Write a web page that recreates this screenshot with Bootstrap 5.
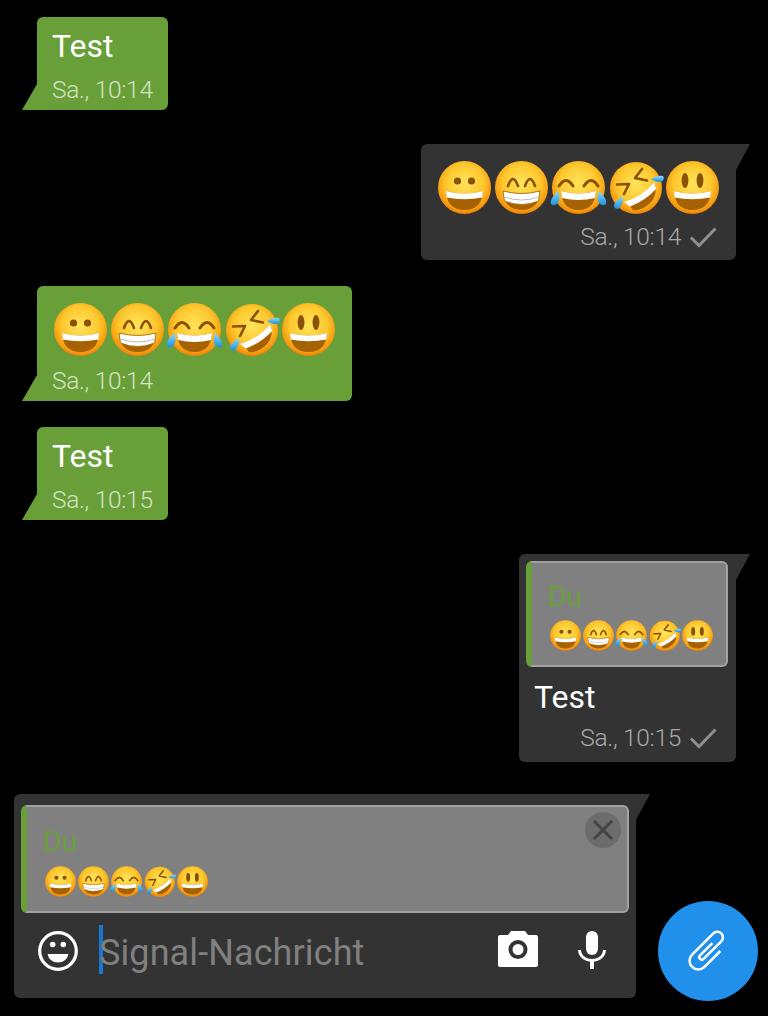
<!DOCTYPE html>
<html lang="de">
<head>
    <meta charset="UTF-8">
    <meta name="viewport" content="width=device-width, initial-scale=1.0">
    <title>Signal</title>
    <link href="https://cdn.jsdelivr.net/npm/bootstrap@5.3.0/dist/css/bootstrap.min.css" rel="stylesheet">
    <style>
        body {
            background: #000;
            font-family: Roboto, "Liberation Sans", sans-serif;
        }
        .chat { padding: 17px 32px 0 37px; height: 794px; }
        .msg {
            position: relative;
            border-radius: 6px;
            padding: 10px 15px 5px;
            color: #fff;
        }
        .msg-in { background: #689f38; align-self: flex-start; border-bottom-left-radius: 0; }
        .msg-out { background: #333; align-self: flex-end; border-top-right-radius: 0; padding-bottom: 8px; }
        .msg-in::before, .msg-out::after, .composer::after {
            content: "";
            position: absolute;
        }
        .msg-in::before {
            left: -15px; bottom: 0; width: 15px; height: 26px;
            background: #689f38;
            clip-path: polygon(100% 0, 100% 100%, 0 100%);
        }
        .msg-out::after, .composer::after {
            right: -14px; top: 0; width: 14px; height: 26px;
            background: #333;
            clip-path: polygon(0 0, 100% 0, 0 100%);
        }
        .msg-text { font-size: 32px; line-height: 38px; margin-bottom: 10px; }
        .msg-time {
            font-size: 24.5px; line-height: 30px; font-weight: 300;
            letter-spacing: -.3px;
            white-space: nowrap;
        }
        .msg-in .msg-time { color: #d3e3c5; }
        .msg-out .msg-time { color: #a8a8a8; }
        .emoji-row { height: 64px; margin: 1px 0 5px; }
        .msg-out .emoji-row { margin-bottom: 3px; }
        .emoji-big { width: 57px; height: 57px; }
        .emoji-small { width: 33px; height: 33px; }
        .emoji-line { margin-left: 1px; }
        .check { width: 28px; height: 22px; margin: 0 4px 0 8px; }
        .gap-a { margin-bottom: 34px; }
        .gap-b { margin-bottom: 26px; }
        .quote {
            background: #808080;
            border: 2px solid #a2a2a2;
            border-left: 6px solid #689f38;
            border-radius: 6px;
            position: relative;
        }
        .quote-name { color: #689f38; font-size: 28px; line-height: 30px; }
        .msg-quoted { width: 217px; padding: 7px 8px 9px 7px; }
        .msg-quoted .quote { height: 106px; padding: 19px 0 0 16px; }
        .msg-quoted .msg-text { margin: 11px 0 7px 8px; }
        .msg-quoted .check { margin-right: 11px; }
        .msg-quoted .quote-name { margin-bottom: 7px; }
        .composer-wrap { padding-left: 14px; }
        .composer {
            position: relative;
            width: 622px; height: 204px;
            background: #333;
            border-radius: 6px;
            border-top-right-radius: 0;
            padding: 11px 7px 0;
        }
        .composer .quote { height: 108px; padding: 20px 0 0 16px; }
        .composer .quote-name { margin-bottom: 8px; }
        .close-btn {
            position: absolute; top: 5px; right: 6px;
            width: 36px; height: 36px;
        }
        .input-row { height: 85px; padding: 0 23px 10px 17px; }
        .face-icon { width: 40px; height: 40px; margin-right: 21px; }
        .caret { width: 4px; height: 49px; background: #1976d2; margin: 0 -4px 2px 0; }
        .hint { color: #808080; font-size: 36px; line-height: 49px; letter-spacing: .1px; margin-top: 6px; }
        .camera-icon { width: 40px; height: 36px; margin: 0 40px 4px 0; }
        .mic-icon { width: 28px; height: 38px; margin-bottom: 2px; }
        .fab {
            width: 100px; height: 100px;
            background: #2090ea;
            border: 0;
            border-radius: 50%;
            margin: 107px 0 0 22px;
        }
        .fab svg { width: 50px; height: 50px; }
    </style>
</head>
<body>
    <svg class="d-block" width="0" height="0" aria-hidden="true">
        <defs>
            <radialGradient id="skin" cx="50%" cy="42%" r="58%">
                <stop offset="0" stop-color="#ffe45c"/>
                <stop offset=".62" stop-color="#fdc72d"/>
                <stop offset=".9" stop-color="#f69a0f"/>
                <stop offset="1" stop-color="#ea7e08"/>
            </radialGradient>
            <linearGradient id="drop" x1="0" y1="0" x2="0" y2="1">
                <stop offset="0" stop-color="#8bdcff"/>
                <stop offset="1" stop-color="#1d8fdc"/>
            </linearGradient>
            <symbol id="e-grin" viewBox="0 0 57 57">
                <circle cx="28.5" cy="28.5" r="26.5" fill="url(#skin)"/>
                <circle cx="21.500" cy="22" r="3.600" fill="#8a5200"/>
                <circle cx="35.500" cy="22" r="3.600" fill="#8a5200"/>
                <path d="M10 32Q28.500 37 47 32Q46 51 28.500 51Q11 51 10 32Z" fill="#a66100"/>
                <path d="M10 32Q28.500 37 47 32L46.300 38.500Q28.500 42 10.700 38.500Z" fill="#fff"/>
            </symbol>
            <symbol id="e-beam" viewBox="0 0 57 57">
                <circle cx="28.5" cy="28.500" r="26.5" fill="url(#skin)"/>
                <path d="M15 27Q20 13 25 27M32 27Q37 13 42 27" fill="none" stroke="#8a5200" stroke-width="2.600" stroke-linecap="round"/>
                <path d="M10 32Q28.500 37 47 32Q46 51 28.500 51Q11 51 10 32Z" fill="#a66100"/>
                <path d="M10 32Q28.500 37 47 32L45.500 42Q28.500 49 11.500 42Z" fill="#fff" stroke="#a66100" stroke-width=".8"/>
                <path d="M11 38Q28.500 44 46 38" fill="none" stroke="#bbb" stroke-width="1"/>
            </symbol>
            <symbol id="e-joy" viewBox="0 0 57 57">
                <circle cx="28.5" cy="28.500" r="26.5" fill="url(#skin)"/>
                <path d="M9 27Q16 16 23 27M34 27Q41 16 48 27" fill="none" stroke="#8a5200" stroke-width="3" stroke-linecap="round"/>
                <path d="M11 32Q28.500 37 46 32Q45 51 28.500 51Q12 51 11 32Z" fill="#a66100"/>
                <path d="M11 32Q28.500 37 46 32L45 39Q28.500 43 12 39Z" fill="#fff"/>
                <path d="M8 32Q11 39 8 44Q4 48 1 45Q-1 41 8 32Z" fill="url(#drop)"/>
                <path d="M49 32Q46 39 49 44Q53 48 56 45Q58 41 49 32Z" fill="url(#drop)"/>
            </symbol>
            <symbol id="e-rofl" viewBox="0 0 57 57">
                <circle cx="29" cy="29" r="26" fill="url(#skin)"/>
                <path d="M20 43Q36 37 47 23Q52 36 42 45Q34 52 26 51Z" fill="#a66100"/>
                <path d="M17 43Q35 38 47 23L49 30Q38 42 23 47.500Z" fill="#fff"/>
                <path d="M10 25.500L22 25L17 35M35 10L28 19L40 21.500" fill="none" stroke="#8a5200" stroke-width="2.600" stroke-linejoin="round" stroke-linecap="round"/>
                <path d="M44 20Q50 16 56 17Q58 20 55 22.500Q49 24 44 20Z" fill="url(#drop)"/>
                <path d="M16 37Q9 41 7 46Q7 50 11 50Q16 47 16 37Z" fill="url(#drop)"/>
            </symbol>
            <symbol id="e-smile" viewBox="0 0 57 57">
                <circle cx="28.5" cy="28.500" r="26.5" fill="url(#skin)"/>
                <ellipse cx="21" cy="21.500" rx="3.400" ry="7.500" fill="#8a5200"/>
                <ellipse cx="36" cy="21.500" rx="3.400" ry="7.500" fill="#8a5200"/>
                <path d="M10 32Q28.500 37 47 32Q46 51 28.500 51Q11 51 10 32Z" fill="#a66100"/>
                <path d="M10 32Q28.500 37 47 32L46.300 38.500Q28.500 42 10.700 38.500Z" fill="#fff"/>
            </symbol>
            <symbol id="i-check" viewBox="0 0 28 22">
                <path d="M2 11.500L10 19.500L26.500 2.500" fill="none" stroke="#8f8f8f" stroke-width="3"/>
            </symbol>
        </defs>
    </svg>

    <main class="chat d-flex flex-column">
        <div class="msg msg-in gap-a">
            <div class="msg-text">Test</div>
            <div class="msg-time">Sa., 10:14</div>
        </div>

        <div class="msg msg-out gap-b">
            <div class="emoji-row d-flex align-items-center">
                <svg class="emoji-big"><use href="#e-grin"/></svg>
                <svg class="emoji-big"><use href="#e-beam"/></svg>
                <svg class="emoji-big"><use href="#e-joy"/></svg>
                <svg class="emoji-big"><use href="#e-rofl"/></svg>
                <svg class="emoji-big"><use href="#e-smile"/></svg>
            </div>
            <div class="d-flex justify-content-end align-items-center">
                <span class="msg-time">Sa., 10:14</span>
                <svg class="check"><use href="#i-check"/></svg>
            </div>
        </div>

        <div class="msg msg-in gap-b">
            <div class="emoji-row d-flex align-items-center">
                <svg class="emoji-big"><use href="#e-grin"/></svg>
                <svg class="emoji-big"><use href="#e-beam"/></svg>
                <svg class="emoji-big"><use href="#e-joy"/></svg>
                <svg class="emoji-big"><use href="#e-rofl"/></svg>
                <svg class="emoji-big"><use href="#e-smile"/></svg>
            </div>
            <div class="msg-time">Sa., 10:14</div>
        </div>

        <div class="msg msg-in gap-a">
            <div class="msg-text">Test</div>
            <div class="msg-time">Sa., 10:15</div>
        </div>

        <div class="msg msg-out msg-quoted">
            <div class="quote">
                <div class="quote-name">Du</div>
                <div class="emoji-line d-flex">
                    <svg class="emoji-small"><use href="#e-grin"/></svg>
                    <svg class="emoji-small"><use href="#e-beam"/></svg>
                    <svg class="emoji-small"><use href="#e-joy"/></svg>
                    <svg class="emoji-small"><use href="#e-rofl"/></svg>
                    <svg class="emoji-small"><use href="#e-smile"/></svg>
                </div>
            </div>
            <div class="msg-text">Test</div>
            <div class="d-flex justify-content-end align-items-center">
                <span class="msg-time">Sa., 10:15</span>
                <svg class="check"><use href="#i-check"/></svg>
            </div>
        </div>
    </main>

    <footer class="composer-wrap d-flex align-items-start">
        <div class="composer">
            <div class="quote">
                <div class="quote-name">Du</div>
                <div class="emoji-line d-flex">
                    <svg class="emoji-small"><use href="#e-grin"/></svg>
                    <svg class="emoji-small"><use href="#e-beam"/></svg>
                    <svg class="emoji-small"><use href="#e-joy"/></svg>
                    <svg class="emoji-small"><use href="#e-rofl"/></svg>
                    <svg class="emoji-small"><use href="#e-smile"/></svg>
                </div>
                <svg class="close-btn" viewBox="0 0 36 36">
                    <circle cx="18" cy="18" r="18" fill="#6c6c6c"/>
                    <path d="M9 9L27 27M27 9L9 27" stroke="#444" stroke-width="3"/>
                </svg>
            </div>
            <div class="input-row d-flex align-items-center">
                <svg class="face-icon" viewBox="0 0 40 40">
                    <circle cx="20" cy="20" r="18.300" fill="none" stroke="#fff" stroke-width="3.200"/>
                    <circle cx="14.700" cy="13.500" r="2.800" fill="#fff"/>
                    <circle cx="25.300" cy="13.500" r="2.800" fill="#fff"/>
                    <path d="M9.500 23H30.500Q28.500 31.500 20 31.500Q11.500 31.500 9.500 23Z" fill="#fff"/>
                </svg>
                <span class="caret"></span>
                <span class="hint flex-grow-1">Signal-Nachricht</span>
                <svg class="camera-icon" viewBox="0 0 40 36">
                    <path fill-rule="evenodd" fill="#fff" d="M13 0H27L30 4H38Q40 4 40 6V34Q40 36 38 36H2Q0 36 0 34V6Q0 4 2 4H10ZM20 9A9.500 9.500 0 1 0 20 28A9.500 9.500 0 1 0 20 9ZM20 13A5.500 5.500 0 1 1 20 24A5.500 5.500 0 1 1 20 13Z"/>
                </svg>
                <svg class="mic-icon" viewBox="0 0 28 38">
                    <rect x="8" y="0" width="12" height="24" rx="6" fill="#fff"/>
                    <path d="M1.500 19C2 26 8 29.500 14 29.500S26 26 26.500 19" fill="none" stroke="#fff" stroke-width="3"/>
                    <rect x="12" y="29" width="4" height="9" fill="#fff"/>
                </svg>
            </div>
        </div>
        <button type="button" class="fab d-flex align-items-center justify-content-center" aria-label="Anhang">
            <svg viewBox="0 0 40 40">
                <path transform="rotate(45 20 20)" d="M27 13V31A7 7 0 0 1 13 31V7A4.500 4.500 0 0 1 22 7V27A2 2 0 0 1 18 27V13" fill="none" stroke="#fff" stroke-width="2"/>
            </svg>
        </button>
    </footer>
</body>
</html>
